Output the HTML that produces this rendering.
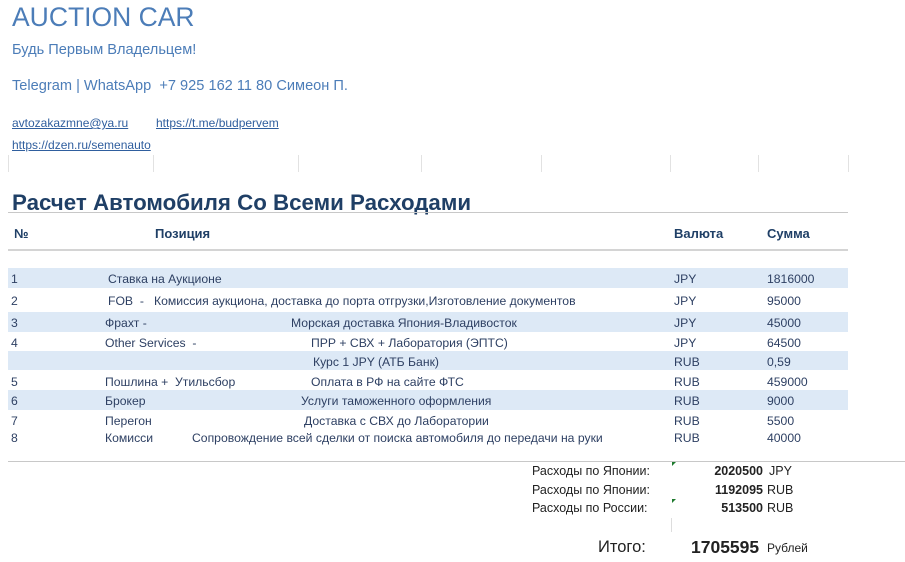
<!DOCTYPE html>
<html><head><meta charset="utf-8"><style>
body{margin:0;width:905px;height:562px;background:#fff;position:relative;overflow:hidden;font-family:"Liberation Sans",sans-serif;color:#2b3e5c}
.a{position:absolute;white-space:nowrap}
.b{position:absolute;left:8px;width:840px;background:#dde9f6}
.t{font-size:12.2px;color:#2e4063}
.l{font-size:12px;color:#2f5e9e;text-decoration:underline}
.tick{position:absolute;top:155px;width:1px;height:17px;background:#e2e2e2}
</style></head><body>
<div class="a" style="left:12px;top:2px;font-size:26.5px;color:#4c7db8">AUCTION CAR</div>
<div class="a" style="left:12px;top:42px;font-size:14.6px;color:#4c7db8">Будь Первым Владельцем!</div>
<div class="a" style="left:12px;top:78px;font-size:14.6px;color:#4c7db8">Telegram | WhatsApp&nbsp; +7 925 162 11 80 Симеон П.</div>
<div class="a l" style="left:12px;top:116px">avtozakazmne@ya.ru</div>
<div class="a l" style="left:156px;top:116px">https://t.me/budpervem</div>
<div class="a l" style="left:12px;top:138px">https://dzen.ru/semenauto</div>
<div class="tick" style="left:8px"></div><div class="tick" style="left:153px"></div><div class="tick" style="left:298px"></div><div class="tick" style="left:421px"></div><div class="tick" style="left:541px"></div><div class="tick" style="left:670px"></div><div class="tick" style="left:758px"></div><div class="tick" style="left:848px"></div>
<div class="a" style="left:12px;top:190px;font-size:22.3px;font-weight:bold;color:#1f3f66">Расчет Автомобиля Со Всеми Расходами</div>
<div class="a" style="left:8px;top:212px;width:840px;height:1px;background:#c8c8c8"></div>
<div class="a" style="left:14px;top:226px;font-size:13px;font-weight:bold;color:#1f3f66">№</div>
<div class="a" style="left:155px;top:226px;font-size:13px;font-weight:bold;color:#1f3f66">Позиция</div>
<div class="a" style="left:674px;top:226px;font-size:13px;font-weight:bold;color:#1f3f66">Валюта</div>
<div class="a" style="left:767px;top:226px;font-size:13px;font-weight:bold;color:#1f3f66">Сумма</div>
<div class="a" style="left:8px;top:249px;width:840px;height:2px;background:#d4d4d4"></div>
<div class="b" style="top:268px;height:20px"></div>
<div class="b" style="top:312px;height:20px"></div>
<div class="b" style="top:351px;height:19px"></div>
<div class="b" style="top:390px;height:20px"></div>
<div class="a t" style="left:11px;top:272px">1</div><div class="a t" style="left:108px;top:272px">Ставка на Аукционе</div><div class="a t" style="left:674px;top:272px">JPY</div><div class="a t" style="left:767px;top:272px">1816000</div>
<div class="a t" style="left:11px;top:294px">2</div><div class="a t" style="left:108px;top:294px">FOB &nbsp;- &nbsp; Комиссия аукциона, доставка до порта отгрузки,Изготовление документов</div><div class="a t" style="left:674px;top:294px">JPY</div><div class="a t" style="left:767px;top:294px">95000</div>
<div class="a t" style="left:11px;top:316px">3</div><div class="a t" style="left:105px;top:316px">Фрахт -</div><div class="a t" style="left:291px;top:316px">Морская доставка Япония-Владивосток</div><div class="a t" style="left:674px;top:316px">JPY</div><div class="a t" style="left:767px;top:316px">45000</div>
<div class="a t" style="left:11px;top:336px">4</div><div class="a t" style="left:105px;top:336px">Other Services &nbsp;-</div><div class="a t" style="left:311px;top:336px">ПРР + СВХ + Лаборатория (ЭПТС)</div><div class="a t" style="left:674px;top:336px">JPY</div><div class="a t" style="left:767px;top:336px">64500</div>
<div class="a t" style="left:313px;top:355px">Курс 1 JPY (АТБ Банк)</div><div class="a t" style="left:674px;top:355px">RUB</div><div class="a t" style="left:767px;top:355px">0,59</div>
<div class="a t" style="left:11px;top:375px">5</div><div class="a t" style="left:105px;top:375px">Пошлина + &nbsp;Утильсбор</div><div class="a t" style="left:311px;top:375px">Оплата в РФ на сайте ФТС</div><div class="a t" style="left:674px;top:375px">RUB</div><div class="a t" style="left:767px;top:375px">459000</div>
<div class="a t" style="left:11px;top:394px">6</div><div class="a t" style="left:105px;top:394px">Брокер</div><div class="a t" style="left:301px;top:394px">Услуги таможенного оформления</div><div class="a t" style="left:674px;top:394px">RUB</div><div class="a t" style="left:767px;top:394px">9000</div>
<div class="a t" style="left:11px;top:414px">7</div><div class="a t" style="left:105px;top:414px">Перегон</div><div class="a t" style="left:304px;top:414px">Доставка с СВХ до Лаборатории</div><div class="a t" style="left:674px;top:414px">RUB</div><div class="a t" style="left:767px;top:414px">5500</div>
<div class="a t" style="left:11px;top:431px">8</div><div class="a t" style="left:105px;top:431px">Комисси</div><div class="a t" style="left:192px;top:431px">Сопровождение всей сделки от поиска автомобиля до передачи на руки</div><div class="a t" style="left:674px;top:431px">RUB</div><div class="a t" style="left:767px;top:431px">40000</div>
<div class="a" style="left:8px;top:461px;width:897px;height:1px;background:#c8c8c8"></div>
<div class="a" style="left:672px;top:462px;width:0;height:0;border-top:4px solid #1e7a2e;border-right:4px solid transparent"></div>
<div class="a" style="left:672px;top:499px;width:0;height:0;border-top:4px solid #1e7a2e;border-right:4px solid transparent"></div>
<div class="a" style="left:671px;top:518px;width:1px;height:14px;background:#ddd"></div>
<div class="a" style="left:532px;top:464px;font-size:12.5px;color:#222">Расходы по Японии:</div>
<div class="a" style="left:532px;top:483px;font-size:12.5px;color:#222">Расходы по Японии:</div>
<div class="a" style="left:532px;top:501px;font-size:12.5px;color:#222">Расходы по России:</div>
<div class="a" style="left:680px;width:83px;text-align:right;top:464px;font-size:12.5px;font-weight:bold;color:#222">2020500</div><div class="a" style="left:769px;top:464px;font-size:12.5px;color:#222">JPY</div>
<div class="a" style="left:680px;width:83px;text-align:right;top:483px;font-size:12.5px;font-weight:bold;color:#222">1192095</div><div class="a" style="left:767px;top:483px;font-size:12.5px;color:#222">RUB</div>
<div class="a" style="left:680px;width:83px;text-align:right;top:501px;font-size:12.5px;font-weight:bold;color:#222">513500</div><div class="a" style="left:767px;top:501px;font-size:12.5px;color:#222">RUB</div>
<div class="a" style="left:598px;top:538px;font-size:16.5px;color:#222">Итого:</div>
<div class="a" style="left:691px;top:537px;font-size:17.5px;font-weight:bold;color:#222">1705595</div>
<div class="a" style="left:767px;top:541px;font-size:12px;color:#222">Рублей</div>
</body></html>
